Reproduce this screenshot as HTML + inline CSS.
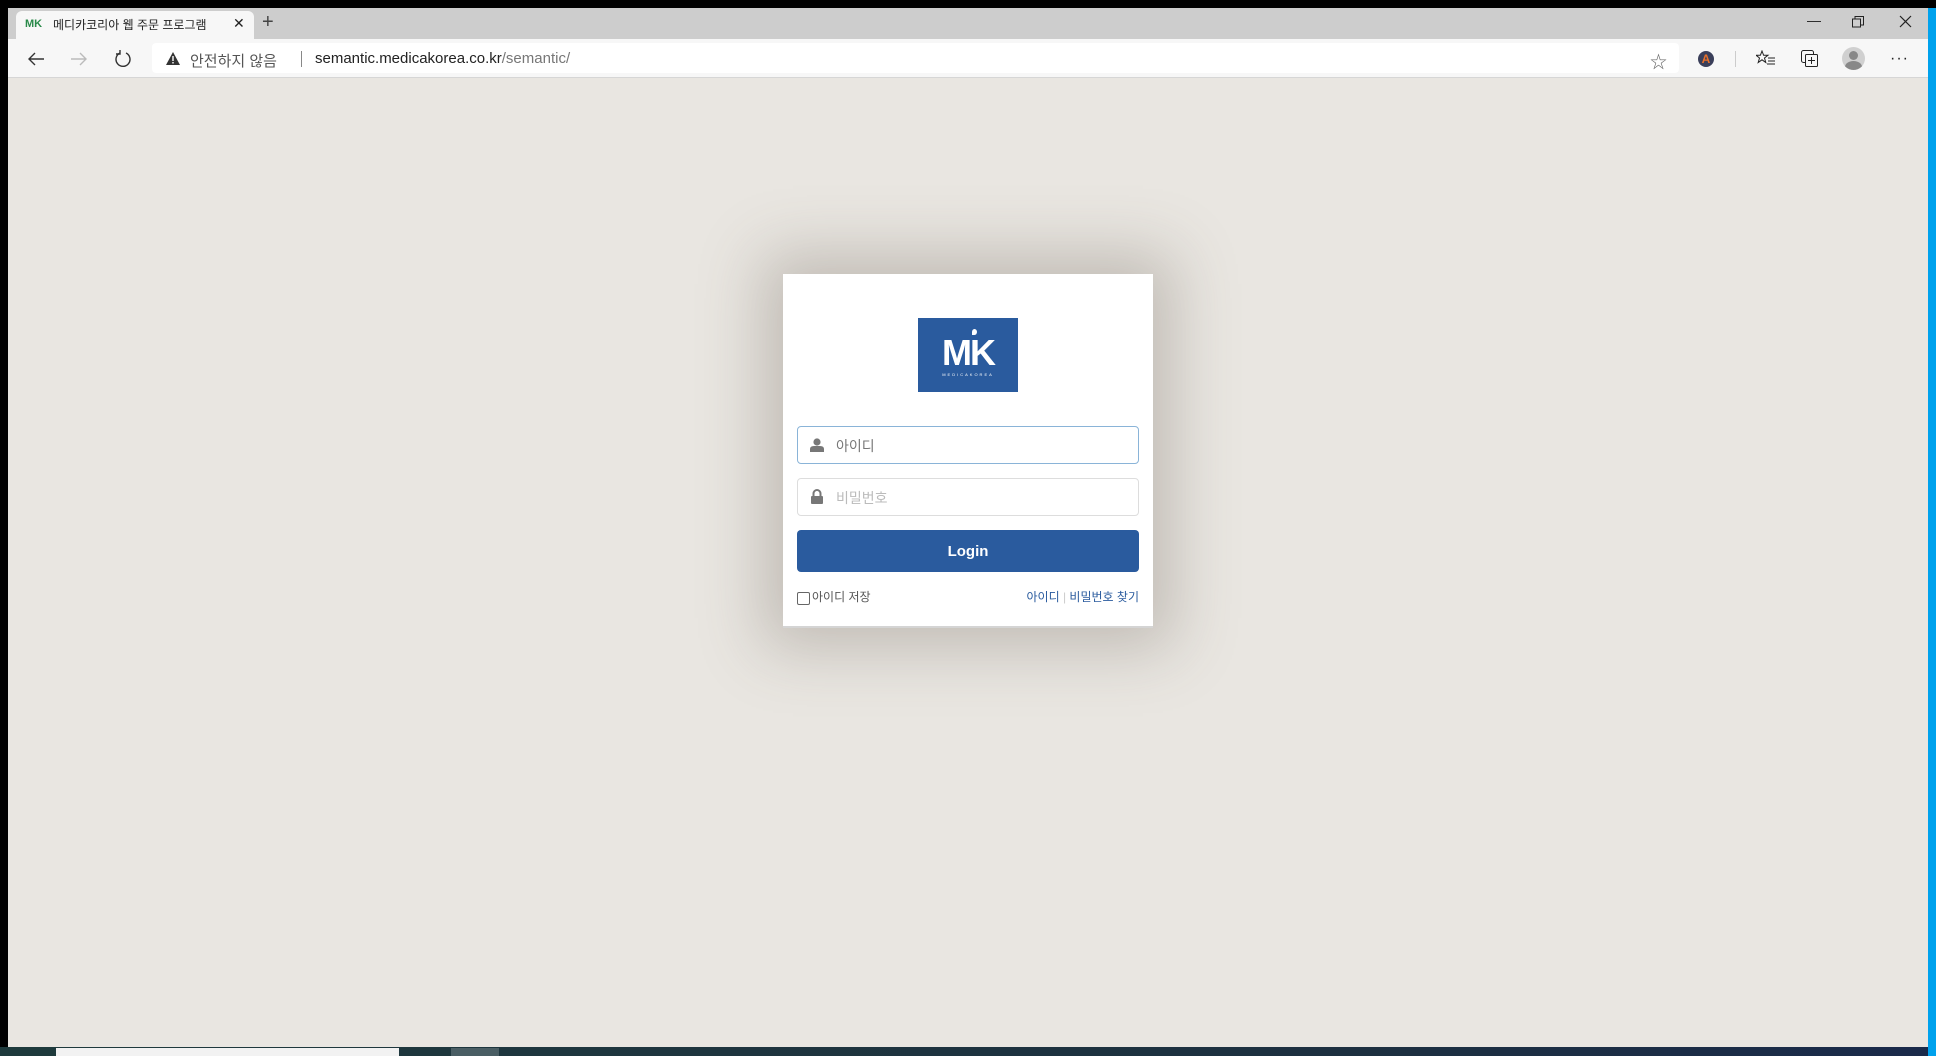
<!DOCTYPE html>
<html><head><meta charset="utf-8"><style>
*{margin:0;padding:0;box-sizing:border-box}
body{width:1936px;height:1056px;overflow:hidden;background:#000;position:relative;font-family:"Liberation Sans","Noto Sans CJK KR",sans-serif}
.abs{position:absolute}
#tabs{left:8px;top:8px;width:1920px;height:31px;background:#cdcdcd}
#tab{left:16px;top:11px;width:238px;height:28px;background:#f7f7f7;border-radius:6px 6px 0 0}
#tool{left:8px;top:39px;width:1920px;height:39px;background:#f7f7f7;border-bottom:1px solid #d6d6d6}
#url{left:152px;top:43px;width:1527px;height:30px;background:#fff;border-radius:4px}
#page{left:8px;top:78px;width:1920px;height:969px;background:#e9e6e1}
#blue{left:1928px;top:8px;width:8px;height:1048px;background:#00a2ed}
#task{left:0;top:1047px;width:1928px;height:9px;background:linear-gradient(90deg,#1e3a3c,#1d3040 70%,#1a2a4a)}
#card{left:783px;top:274px;width:370px;height:354px;background:#fff;box-shadow:0 0 60px 20px rgba(90,80,70,.28);border-bottom:2px solid #d4d4d4}
.inp{position:absolute;left:14px;width:342px;height:38px;border:1px solid #ddd;border-radius:4px;font-size:14px}
.inp span{position:absolute;left:38px;top:9px}
.btn{position:absolute;left:14px;top:256px;width:342px;height:42px;background:#2a5b9e;border-radius:4px;color:#fff;font-weight:bold;font-size:15px;text-align:center;line-height:43px;font-family:"Liberation Sans",sans-serif}
</style></head><body>
<div class="abs" id="tabs"></div>
<div class="abs" id="tab"></div>
<div class="abs" style="left:25px;top:18px;font-size:11px;font-weight:bold;color:#2a8a4a">MK</div>
<div class="abs" style="left:53px;top:16px;font-size:12px;color:#222">메디카코리아 웹 주문 프로그램</div>
<div class="abs" style="left:233px;top:15px;font-size:14px;color:#222">✕</div>
<div class="abs" style="left:262px;top:11px;font-size:20px;color:#444">+</div>
<div class="abs" style="left:1807px;top:12px;font-size:14px;color:#222">—</div>
<svg class="abs" style="left:1852px;top:16px" width="12" height="12"><rect x="0.5" y="3" width="8" height="8" fill="none" stroke="#222"/><path d="M3 3V0.5H11.5V9H9" fill="none" stroke="#222"/></svg>
<svg class="abs" style="left:1899px;top:15px" width="13" height="13"><path d="M1 1L12 12M12 1L1 12" stroke="#222" stroke-width="1.2"/></svg>
<div class="abs" id="tool"></div>
<svg class="abs" style="left:27px;top:51px" width="18" height="16"><path d="M17 8H2M8 2L2 8L8 14" fill="none" stroke="#333" stroke-width="1.4"/></svg>
<svg class="abs" style="left:70px;top:51px" width="18" height="16"><path d="M1 8H16M10 2L16 8L10 14" fill="none" stroke="#bbb" stroke-width="1.4"/></svg>
<svg class="abs" style="left:114px;top:50px" width="18" height="18"><path d="M6 3A7 7 0 1 0 12 3" fill="none" stroke="#333" stroke-width="1.4"/><path d="M6 0V4H2" fill="none" stroke="#333" stroke-width="1.4"/></svg>
<div class="abs" id="url"></div>
<svg class="abs" style="left:166px;top:52px" width="14" height="13"><path d="M7 0L14 13H0Z" fill="#333"/><rect x="6.3" y="4" width="1.4" height="5" fill="#fff"/><rect x="6.3" y="10" width="1.4" height="1.5" fill="#fff"/></svg>
<div class="abs" style="left:190px;top:50px;font-size:15px;color:#555">안전하지 않음</div>
<div class="abs" style="left:301px;top:51px;width:1px;height:16px;background:#888"></div>
<div class="abs" style="left:315px;top:50px;font-size:15px;color:#222">semantic.medicakorea.co.kr<span style="color:#777">/semantic/</span></div>
<div class="abs" style="left:1650px;top:48px;font-size:17px;color:#666">☆</div>
<div class="abs" style="left:1698px;top:51px;width:16px;height:16px;border-radius:50%;background:#3a3f5a;color:#e8702a;font-size:12px;font-weight:bold;text-align:center;line-height:16px">A</div>
<div class="abs" style="left:1735px;top:51px;width:1px;height:16px;background:#ccc"></div>
<svg class="abs" style="left:1756px;top:50px" width="20" height="16"><path d="M6 1L7.6 5.2H12L8.5 8L9.8 12.5L6 9.8L2.2 12.5L3.5 8L0 5.2H4.4Z" fill="none" stroke="#222"/><path d="M12 8H19M12 11H19M11 14H19" stroke="#222"/></svg>
<svg class="abs" style="left:1801px;top:50px" width="18" height="18"><rect x="0.5" y="0.5" width="12" height="12" rx="2" fill="#f7f7f7" stroke="#222"/><rect x="4.5" y="4.5" width="12" height="12" rx="1" fill="#f7f7f7" stroke="#222"/><path d="M10.5 7V14M7 10.5H14" stroke="#222"/></svg>
<div class="abs" style="left:1842px;top:47px;width:23px;height:23px;border-radius:50%;background:#d0d0d0;overflow:hidden"><div class="abs" style="left:7px;top:4px;width:9px;height:9px;border-radius:50%;background:#888"></div><div class="abs" style="left:3px;top:14px;width:17px;height:12px;border-radius:50%;background:#888"></div></div>
<div class="abs" style="left:1890px;top:50px;font-size:16px;color:#222;letter-spacing:1px">···</div>
<div class="abs" id="page"></div>
<div class="abs" id="blue"></div>
<div class="abs" id="task"></div>
<div class="abs" style="left:56px;top:1048px;width:343px;height:8px;background:#f2f2f2"></div>
<div class="abs" style="left:451px;top:1048px;width:48px;height:8px;background:#4a5e64"></div>
<div class="abs" id="card">
 <div class="abs" style="left:135px;top:44px;width:100px;height:74px;background:#2a5b9e;color:#fff;text-align:center">
  <div class="abs" style="left:54px;top:11px;width:5px;height:6px;border-radius:50% 50% 50% 0;background:#fff"></div>
  <div style="font-size:36px;font-weight:bold;margin-top:17px;letter-spacing:-2px;line-height:36px">MK</div>
  <div style="font-size:4px;letter-spacing:2px;margin-top:1px">MEDICAKOREA</div>
 </div>
 <div class="inp" style="top:152px;border-color:#8ab4d8;color:#777">
  <svg class="abs" style="left:12px;top:11px" width="14" height="14"><circle cx="7" cy="4" r="3.6" fill="#777"/><path d="M0 14V11Q0 8 4 8H10Q14 8 14 11V14Z" fill="#777"/></svg>
  <span>아이디</span></div>
 <div class="inp" style="top:204px;color:#bbb">
  <svg class="abs" style="left:13px;top:10px" width="12" height="15"><path d="M2.5 7V4.5A3.5 3.5 0 0 1 9.5 4.5V7" fill="none" stroke="#777" stroke-width="2"/><rect x="0" y="7" width="12" height="8" rx="1" fill="#777"/></svg>
  <span>비밀번호</span></div>
 <div class="btn">Login</div>
 <div class="abs" style="left:14px;top:318px;width:13px;height:13px;border:1px solid #666;border-radius:2px"></div>
 <div class="abs" style="left:29px;top:314px;font-size:12px;color:#555">아이디 저장</div>
 <div class="abs" style="right:14px;top:314px;font-size:12px;color:#2a5b9e">아이디 <span style="color:#ccc">|</span> 비밀번호 찾기</div>
</div>
</body></html>
